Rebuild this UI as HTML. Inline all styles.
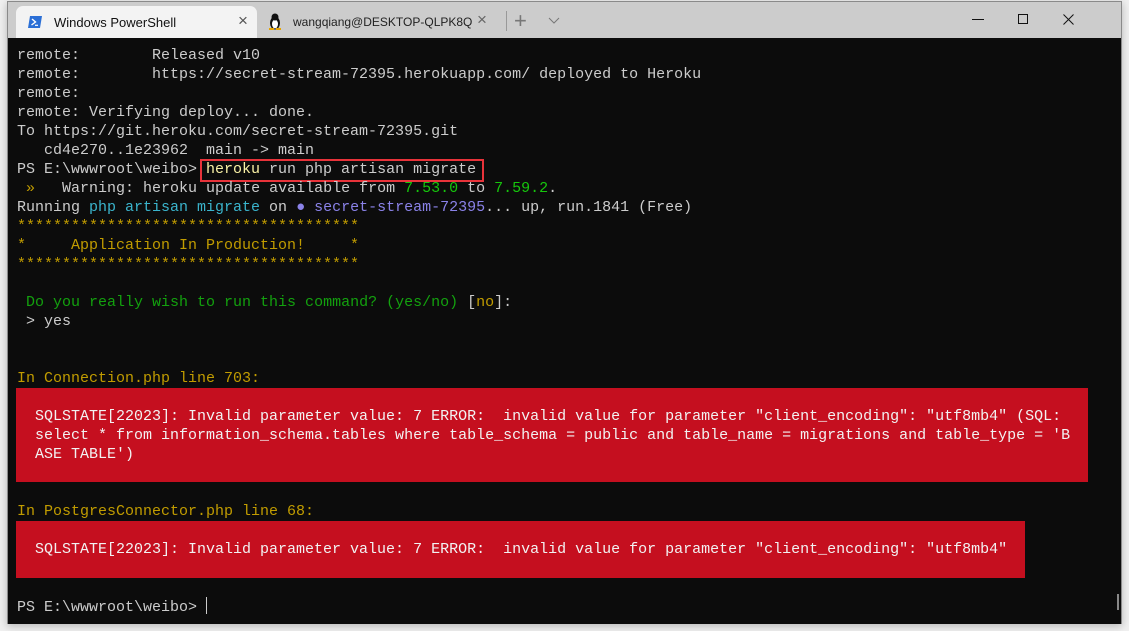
<!DOCTYPE html>
<html><head><meta charset="utf-8"><style>
*{margin:0;padding:0;box-sizing:border-box}
html,body{width:1129px;height:631px;overflow:hidden;background:#f0f0f0}
.win{position:absolute;left:7px;top:1px;width:1115px;height:623px;background:#cccccc;border:1px solid #8a8a8a;box-shadow:0 2px 8px rgba(0,0,0,.25)}
.tab{position:absolute;left:8px;top:4px;width:241px;height:32px;background:#f3f3f3;border-radius:7px 7px 0 0;font:13px "Liberation Sans",sans-serif;color:#111}
.term{position:absolute;left:0;top:36px;width:1113px;height:586px;background:#0c0c0c}
.red{position:absolute;background:#c50f1f}
.txt{position:absolute;left:9px;top:8px;font:15px/19px "Liberation Mono",monospace;color:#cccccc;white-space:pre}
.y{color:#c19c00}.g{color:#13a10e}.c{color:#3ab4cc}.p{color:#8a82e8}.w{color:#f2f2f2}.hy{color:#f9f1a5}.lg{color:#16c60c}
</style></head><body>
<div class="win">
  <div class="tab">
    <svg style="position:absolute;left:12px;top:10px" width="14" height="12" viewBox="0 0 14 12"><path d="M2 0H14L12 12H0Z" fill="#2b6fd6"/><path d="M4 3L7.5 6L3.5 9" stroke="#fff" stroke-width="1.4" fill="none"/><path d="M7 9.3H10" stroke="#fff" stroke-width="1.2"/></svg>
    <span style="position:absolute;left:38px;top:9px">Windows PowerShell</span>
    <span style="position:absolute;left:222px;top:5px;font-size:17px;color:#555">×</span>
  </div>
  <svg style="position:absolute;left:260px;top:11px" width="14" height="17" viewBox="0 0 14 17"><ellipse cx="7" cy="10" rx="5" ry="6.5" fill="#111"/><ellipse cx="7" cy="11" rx="3" ry="4.5" fill="#fff"/><circle cx="7" cy="4" r="3.5" fill="#111"/><path d="M1 16h5M8 16h5" stroke="#e8a400" stroke-width="2"/></svg>
  <span style="position:absolute;left:285px;top:13px;font:12px 'Liberation Sans',sans-serif;color:#222">wangqiang@DESKTOP-QLPK8Q</span>
  <span style="position:absolute;left:469px;top:8px;font:17px 'Liberation Sans',sans-serif;color:#666">×</span>
  <div style="position:absolute;left:498px;top:9px;width:1px;height:20px;background:#999"></div>
  <span style="position:absolute;left:506px;top:6px;font:22px 'Liberation Sans',sans-serif;color:#777">+</span>
  <svg style="position:absolute;left:540px;top:15px" width="12" height="7"><path d="M1 1L6 6L11 1" stroke="#777" fill="none"/></svg>
  <div style="position:absolute;left:964px;top:17px;width:12px;height:1px;background:#111"></div>
  <div style="position:absolute;left:1010px;top:12px;width:10px;height:10px;border:1px solid #111"></div>
  <svg style="position:absolute;left:1055px;top:12px" width="11" height="11"><path d="M0.5 0.5L10.5 10.5M10.5 0.5L0.5 10.5" stroke="#111"/></svg>
  <div class="term">
    <div class="red" style="left:8px;top:350px;width:1072px;height:94px"></div>
    <div class="red" style="left:8px;top:483px;width:1009px;height:57px"></div>
    <div style="position:absolute;left:192px;top:121px;width:284px;height:23px;border:2px solid #e8333a"></div>
    <div style="position:absolute;left:1109px;top:556px;width:2px;height:16px;background:#888"></div>
<div class="txt">remote:        Released v10
remote:        https://secret-stream-72395.herokuapp.com/ deployed to Heroku
remote:
remote: Verifying deploy... done.
To https://git.heroku.com/secret-stream-72395.git
   cd4e270..1e23962  main -&gt; main
PS E:\wwwroot\weibo&gt; <span class="hy">heroku</span> run php artisan migrate
 <span class="y">»</span>   Warning: heroku update available from <span class="lg">7.53.0</span> to <span class="lg">7.59.2</span>.
Running <span class="c">php artisan migrate</span> on <span class="p">● secret-stream-72395</span>... up, run.1841 (Free)
<span class="y">**************************************
*     Application In Production!     *
**************************************</span>

 <span class="g">Do you really wish to run this command? (yes/no)</span> [<span class="y">no</span>]:
 &gt; yes


<span class="y">In Connection.php line 703:</span>

<span class="w">  SQLSTATE[22023]: Invalid parameter value: 7 ERROR:  invalid value for parameter "client_encoding": "utf8mb4" (SQL:
  select * from information_schema.tables where table_schema = public and table_name = migrations and table_type = 'B
  ASE TABLE')</span>


<span class="y">In PostgresConnector.php line 68:</span>

<span class="w">  SQLSTATE[22023]: Invalid parameter value: 7 ERROR:  invalid value for parameter "client_encoding": "utf8mb4"</span>


PS E:\wwwroot\weibo&gt; <span style="display:inline-block;width:1px;height:17px;background:#ccc;vertical-align:-3px"></span></div>
  </div>
</div>
</body></html>
